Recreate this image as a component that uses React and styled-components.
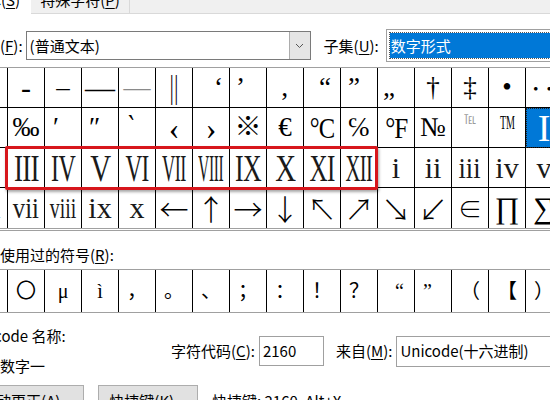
import React from "react";
import styled, { createGlobalStyle } from "styled-components";

const GlobalStyle = createGlobalStyle`
  html, body {
    margin: 0;
    padding: 0;
    background: #fff;
    overflow: hidden;
  }
  body {
    width: 550px;
    height: 400px;
    font-family: "Noto Sans CJK SC", "Noto Sans", sans-serif;
    color: #000;
  }
`;

const FONTS = {
  serif: `"Liberation Serif", "DejaVu Serif", "Noto Sans CJK SC", serif`,
  cjk: `"Noto Sans CJK SC", "DejaVu Sans", sans-serif`,
};

const Dialog = styled.div`
  margin: -14px 0 0 -40px;
  width: 700px;
  font-size: 15px;
  line-height: 20px;
`;

const TabStrip = styled.div`
  display: flex;
  height: 28px;
  background: #f0f0f0;
`;

const Tab = styled.div`
  box-sizing: border-box;
  width: ${(p) => p.$w}px;
  display: flex;
  align-items: center;
  justify-content: center;
  white-space: nowrap;
  background: ${(p) => (p.$active ? "#fff" : "#f0f0f0")};
  border: ${(p) => (p.$active ? "none" : "1px solid #d9d9d9")};
  border-left: none;
`;

const TabFill = styled.div`
  flex: 1;
  border-bottom: 1px solid #d9d9d9;
`;

const Key = styled.span`
  text-decoration: underline;
  text-underline-offset: 2px;
`;

const Body = styled.div`
  padding-left: 10px;
`;

const FontRow = styled.div`
  display: flex;
  align-items: center;
  height: 33px;
  margin-top: 15px;
`;

const Label = styled.span`
  white-space: nowrap;
  margin-left: ${(p) => p.$ml || 0}px;
`;

const Combo = styled.div`
  box-sizing: border-box;
  display: flex;
  align-items: center;
  width: 285px;
  height: 29px;
  margin-left: 3px;
  padding-left: 3px;
  border: 1px solid #7a7a7a;
`;

const DropButton = styled.div`
  box-sizing: border-box;
  margin-left: auto;
  width: 21px;
  height: 100%;
  display: flex;
  align-items: center;
  justify-content: center;
  background: #e5e5e5;
  border-left: 1px solid #acacac;
`;

const Field = styled.div`
  box-sizing: border-box;
  display: flex;
  align-items: center;
  width: ${(p) => p.$w}px;
  height: ${(p) => p.$h}px;
  margin-left: ${(p) => p.$ml || 0}px;
  padding: ${(p) => (p.$pad ? "3px" : "0 0 0 3px")};
  border: 1px solid #a0a0a0;
  flex-shrink: 0;
`;

const Highlight = styled.div`
  flex: 1;
  align-self: stretch;
  display: flex;
  align-items: center;
  padding-left: 1px;
  background: #0078d7;
  color: #fff;
  outline: 1px dotted #555;
`;

const Grid = styled.div`
  position: relative;
  display: grid;
  grid-template-columns: repeat(16, 37px);
  width: max-content;
  margin-top: 5px;
  border-left: 1px solid #000;
  border-top: 1px solid #a0a0a0;
  border-bottom: 3px double #a0a0a0;
`;

const Cell = styled.div`
  box-sizing: border-box;
  height: ${(p) => p.$h}px;
  display: flex;
  align-items: center;
  justify-content: ${(p) => (p.$x == null ? "center" : "flex-start")};
  padding-left: ${(p) => p.$x || 0}px;
  border-right: 1px solid #000;
  border-bottom: ${(p) => (p.$last ? "none" : "1px solid #000")};
  background: ${(p) => (p.$selected ? "#0078d7" : "transparent")};
  outline: ${(p) => (p.$selected ? "1px dotted #222" : "none")};
  outline-offset: -1px;
  overflow: hidden;
`;

const Glyph = styled.span`
  display: inline-block;
  flex-shrink: 0;
  font-family: ${(p) => FONTS[p.$font || "serif"]};
  font-size: ${(p) => p.$size}px;
  font-weight: ${(p) => p.$weight || 400};
  line-height: 1;
  letter-spacing: ${(p) => p.$ls || 0}px;
  color: ${(p) => p.$color || "#000"};
  white-space: nowrap;
  transform: translateY(${(p) => p.$dy || 0}px) scaleX(${(p) => p.$sx || 1});
`;

const Callout = styled.div`
  position: absolute;
  left: 34px;
  top: 78px;
  width: 373px;
  height: 44px;
  box-sizing: border-box;
  border: 3px solid #d7161c;
  border-radius: 2px;
  box-shadow: 1px 2px 3px rgba(0, 0, 0, 0.35);
  pointer-events: none;
`;

const Caption = styled.div`
  margin-top: ${(p) => p.$mt || 0}px;
  white-space: nowrap;
`;

const RecentRow = styled.div`
  display: grid;
  grid-template-columns: repeat(16, 37px);
  width: max-content;
  margin-top: 4px;
  border-top: 1px solid #a0a0a0;
  border-bottom: 1px solid #a0a0a0;
  border-left: 1px solid #000;
`;

const InfoRow = styled.div`
  display: flex;
  align-items: center;
  margin-top: 13px;
`;

const NameColumn = styled.div`
  width: 201px;
  display: flex;
  flex-direction: column;
  gap: 10px;
`;

const ButtonRow = styled.div`
  display: flex;
  align-items: center;
  margin-top: 9px;
`;

const Button = styled.div`
  box-sizing: border-box;
  width: ${(p) => p.$w}px;
  height: 32px;
  margin-left: ${(p) => p.$ml || 0}px;
  display: flex;
  align-items: center;
  justify-content: center;
  background: #e1e1e1;
  border: 1px solid #adadad;
  white-space: nowrap;
`;

const Chevron = () => (
  <svg width="9" height="6" viewBox="0 0 9 6">
    <polyline points="1,1 4.5,4.5 8,1" fill="none" stroke="#555" strokeWidth="1" />
  </svg>
);

// one symbol: text plus placement (x inset, font, size, squeeze, lift, colour)
const g = (c, o = {}) => ({ c, ...o });

// upper-case numerals set as condensed serif capitals
const upper = [
  ["II", 0.94],
  ["III", 0.71],
  ["IV", 0.63],
  ["V", 0.76],
  ["VI", 0.61],
  ["VII", 0.48],
  ["VIII", 0.41],
  ["IX", 0.68],
  ["X", 0.76],
  ["XI", 0.66],
  ["XII", 0.54],
].map(([c, sx]) => g(c, { size: 38, ls: -1, sx, color: "#1a1a1a" }));

const lower = [
  ["i", 1],
  ["ii", 1],
  ["iii", 0.88],
  ["iv", 1],
  ["v", 1],
  ["vi", 1],
  ["vii", 0.82],
  ["viii", 0.66],
  ["ix", 1],
  ["x", 1],
].map(([c, sx]) => g(c, { size: 30, sx, color: "#1a1a1a" }));

const arrow = (c) => g(c, { font: "cjk", size: 29, weight: 200 });

const rows = [
  [
    g(""),
    g("‐", { size: 30 }),
    g("–"),
    g("—", { size: 30 }),
    g("―", { color: "#8a8a8a" }),
    g("‖", { font: "cjk", size: 30, weight: 200 }),
    g("‘", { x: 21 }),
    g("’", { x: 6 }),
    g("‚", { x: 13 }),
    g("“", { x: 15 }),
    g("”", { x: 7 }),
    g("„", { x: 5 }),
    g("†"),
    g("‡"),
    g("•"),
    g("‥", { font: "cjk", x: 3 }),
  ],
  [
    g("…", { font: "cjk", x: 0 }),
    g("‰"),
    g("′", { x: 8 }),
    g("″", { x: 7 }),
    g("‵", { x: 9 }),
    g("‹", { size: 32 }),
    g("›", { size: 32 }),
    g("※"),
    g("€"),
    g("°C", { size: 30, ls: -1, sx: 0.82 }),
    g("℅"),
    g("°F", { size: 30, ls: -1, sx: 0.84 }),
    g("№"),
    g("℡", { size: 12, color: "#9a9a9a", dy: -8 }),
    g("TM", { size: 18, sx: 0.56, dy: -5 }),
    g("I", { size: 38, color: "#fff", selected: true }),
  ],
  [...upper, ...lower.slice(0, 5)],
  [
    ...lower.slice(5),
    arrow("←"),
    arrow("↑"),
    arrow("→"),
    arrow("↓"),
    arrow("↖"),
    arrow("↗"),
    arrow("↘"),
    arrow("↙"),
    g("∈", { font: "cjk", size: 24, weight: 200 }),
    g("∏", { size: 30 }),
    g("∑", { size: 30 }),
  ],
];

const recent = [
  g("—"),
  g("〇"),
  g("μ"),
  g("ì"),
  g("，"),
  g("。"),
  g("、"),
  g("；"),
  g("："),
  g("！"),
  g("？"),
  g("“", { x: 17 }),
  g("”", { x: 8 }),
  g("（"),
  g("【"),
  g("）"),
];

const Symbol = ({ s, size, h, last }) => (
  <Cell $h={h} $x={s.x} $last={last} $selected={s.selected}>
    <Glyph
      $font={s.font}
      $size={s.size || size}
      $weight={s.weight}
      $ls={s.ls}
      $sx={s.sx}
      $dy={s.dy}
      $color={s.color}
    >
      {s.c}
    </Glyph>
  </Cell>
);

export default function App() {
  return (
    <>
      <GlobalStyle />
      <Dialog>
        <TabStrip>
          <Tab $w={71} $active>
            字体(<Key>S</Key>)
          </Tab>
          <Tab $w={99}>
            特殊字符(<Key>P</Key>)
          </Tab>
          <TabFill />
        </TabStrip>

        <Body>
          <FontRow>
            <Label>
              字体(<Key>F</Key>):
            </Label>
            <Combo>
              (普通文本)
              <DropButton>
                <Chevron />
              </DropButton>
            </Combo>
            <Label $ml={13}>
              子集(<Key>U</Key>):
            </Label>
            <Field $w={220} $h={33} $ml={7} $pad>
              <Highlight>数字形式</Highlight>
            </Field>
          </FontRow>

          <Grid>
            {rows.map((row, r) =>
              row.map((s, i) => (
                <Symbol key={`${r}-${i}`} s={s} size={27} h={40} last={r === rows.length - 1} />
              ))
            )}
            <Callout />
          </Grid>

          <Caption $mt={14}>
            近期使用过的符号(<Key>R</Key>):
          </Caption>
          <RecentRow>
            {recent.map((s, i) => (
              <Symbol key={i} s={s} size={20} h={42} last />
            ))}
          </RecentRow>

          <InfoRow>
            <NameColumn>
              <span>Unicode 名称:</span>
              <span>罗马数字一</span>
            </NameColumn>
            <Label>
              字符代码(<Key>C</Key>):
            </Label>
            <Field $w={65} $h={30} $ml={4}>
              2160
            </Field>
            <Label $ml={12}>
              来自(<Key>M</Key>):
            </Label>
            <Field $w={220} $h={31} $ml={4}>
              Unicode(十六进制)
            </Field>
          </InfoRow>

          <ButtonRow>
            <Button $w={114}>
              自动更正(<Key>A</Key>)...
            </Button>
            <Button $w={100} $ml={14}>
              快捷键(<Key>K</Key>)...
            </Button>
            <Label $ml={14}>快捷键: 2160, Alt+X</Label>
          </ButtonRow>
        </Body>
      </Dialog>
    </>
  );
}
